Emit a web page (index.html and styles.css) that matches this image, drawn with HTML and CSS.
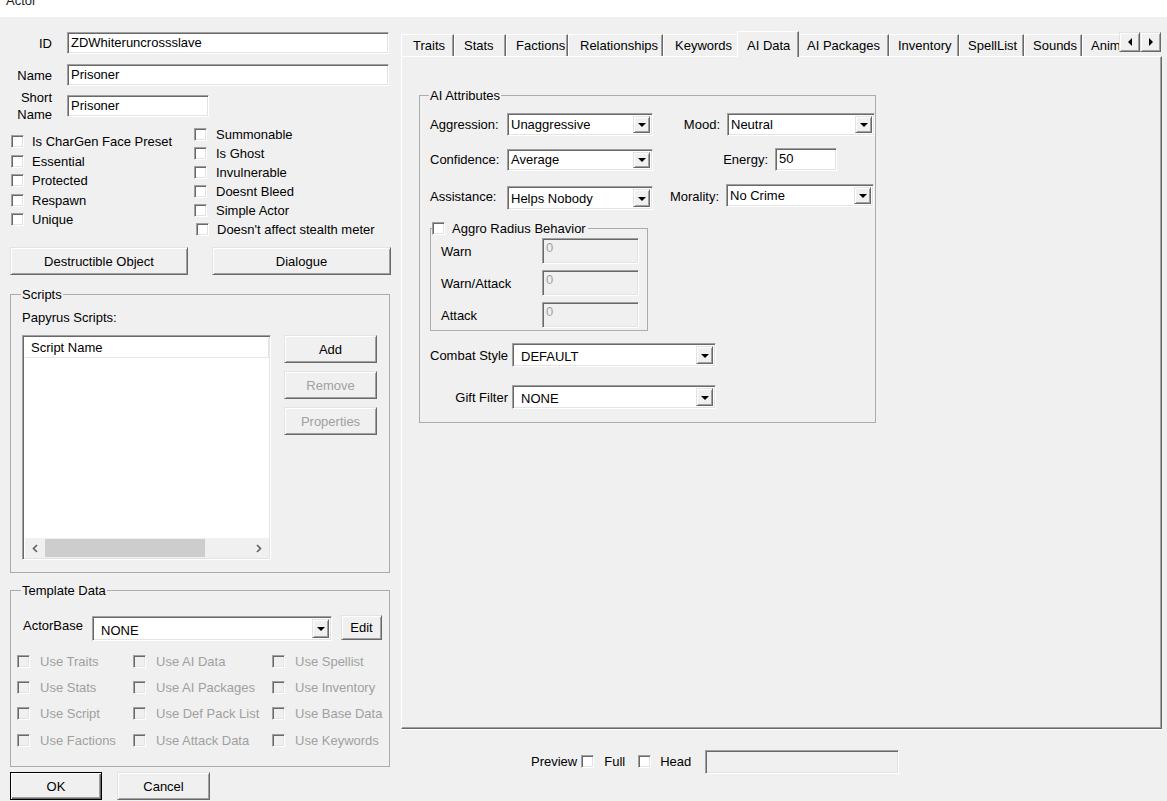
FILE: index.html
```html
<!DOCTYPE html>
<html lang="en">
<head>
    <meta charset="utf-8">
    <title>Actor</title>
    <link rel="stylesheet" href="styles.css">
</head>
<body>
<div class="caption"><span>Actor</span></div>

<div class="dialog">
    <!-- left side: base record fields -->
    <div class="left">
        <div class="field-row row-id">
            <span class="field-label">ID</span>
            <div class="edit edit-long">ZDWhiteruncrossslave</div>
        </div>
        <div class="field-row row-name">
            <span class="field-label">Name</span>
            <div class="edit edit-long">Prisoner</div>
        </div>
        <div class="field-row row-short">
            <span class="field-label">Short<br>Name</span>
            <div class="edit edit-short">Prisoner</div>
        </div>

        <div class="flags">
            <div class="flag-col flag-col-a">
                <div class="check-row"><span class="check"></span>Is CharGen Face Preset</div>
                <div class="check-row"><span class="check"></span>Essential</div>
                <div class="check-row"><span class="check"></span>Protected</div>
                <div class="check-row"><span class="check"></span>Respawn</div>
                <div class="check-row"><span class="check"></span>Unique</div>
            </div>
            <div class="flag-col flag-col-b">
                <div class="check-row"><span class="check"></span>Summonable</div>
                <div class="check-row"><span class="check"></span>Is Ghost</div>
                <div class="check-row"><span class="check"></span>Invulnerable</div>
                <div class="check-row"><span class="check"></span>Doesnt Bleed</div>
                <div class="check-row"><span class="check"></span>Simple Actor</div>
                <div class="check-row shifted"><span class="check"></span>Doesn't affect stealth meter</div>
            </div>
        </div>

        <div class="btn-row">
            <button class="btn btn-destructible">Destructible Object</button>
            <button class="btn btn-dialogue">Dialogue</button>
        </div>

        <fieldset class="group group-scripts">
            <legend>Scripts</legend>
            <div class="papyrus-label">Papyrus Scripts:</div>
            <div class="scripts-body">
                <div class="listbox">
                    <div class="list-header">Script Name</div>
                    <div class="list-body"></div>
                    <div class="hscroll">
                        <span class="hscroll-arrow">
                            <svg width="6" height="9" viewBox="0 0 6 9"><polyline points="5,1 1.5,4.5 5,8" fill="none" stroke="#606060" stroke-width="1.6"/></svg>
                        </span>
                        <span class="hscroll-track"><span class="hscroll-thumb"></span></span>
                        <span class="hscroll-arrow">
                            <svg width="6" height="9" viewBox="0 0 6 9"><polyline points="1,1 4.5,4.5 1,8" fill="none" stroke="#606060" stroke-width="1.6"/></svg>
                        </span>
                    </div>
                </div>
                <div class="list-buttons">
                    <button class="btn btn-side">Add</button>
                    <button class="btn btn-side disabled">Remove</button>
                    <button class="btn btn-side disabled">Properties</button>
                </div>
            </div>
        </fieldset>

        <fieldset class="group group-template">
            <legend>Template Data</legend>
            <div class="actorbase-row">
                <span class="actorbase-label">ActorBase</span>
                <div class="combo combo-wide combo-actorbase"><span class="combo-text">NONE</span><span class="combo-btn"></span></div>
                <button class="btn btn-edit">Edit</button>
            </div>
            <div class="template-grid">
                <div class="check-row disabled"><span class="check"></span>Use Traits</div>
                <div class="check-row disabled"><span class="check"></span>Use AI Data</div>
                <div class="check-row disabled"><span class="check"></span>Use Spellist</div>
                <div class="check-row disabled"><span class="check"></span>Use Stats</div>
                <div class="check-row disabled"><span class="check"></span>Use AI Packages</div>
                <div class="check-row disabled"><span class="check"></span>Use Inventory</div>
                <div class="check-row disabled"><span class="check"></span>Use Script</div>
                <div class="check-row disabled"><span class="check"></span>Use Def Pack List</div>
                <div class="check-row disabled"><span class="check"></span>Use Base Data</div>
                <div class="check-row disabled"><span class="check"></span>Use Factions</div>
                <div class="check-row disabled"><span class="check"></span>Use Attack Data</div>
                <div class="check-row disabled"><span class="check"></span>Use Keywords</div>
            </div>
        </fieldset>

        <div class="btn-row bottom-btns">
            <button class="btn btn-default btn-ok">OK</button>
            <button class="btn btn-cancel">Cancel</button>
        </div>
    </div>

    <!-- right side: tab control -->
    <div class="right">
        <div class="tabs">
            <div class="tab tab-traits">Traits</div>
            <div class="tab tab-stats">Stats</div>
            <div class="tab tab-factions">Factions</div>
            <div class="tab tab-relationships">Relationships</div>
            <div class="tab tab-keywords">Keywords</div>
            <div class="tab tab-aidata active">AI Data</div>
            <div class="tab tab-aipackages">AI Packages</div>
            <div class="tab tab-inventory">Inventory</div>
            <div class="tab tab-spelllist">SpellList</div>
            <div class="tab tab-sounds">Sounds</div>
            <div class="tab tab-anim">Animation</div>
            <div class="tab-scroll">
                <span class="scroll-btn"><span class="tri tri-left"></span></span>
                <span class="scroll-btn"><span class="tri tri-right"></span></span>
            </div>
        </div>

        <div class="tab-panel">
            <fieldset class="group group-ai">
                <legend>AI Attributes</legend>

                <div class="ai-row ai-row-1">
                    <span class="ai-label">Aggression:</span>
                    <div class="combo combo-ai"><span class="combo-text">Unaggressive</span><span class="combo-btn"></span></div>
                    <span class="ai-label-2 label-mood">Mood:</span>
                    <div class="combo combo-ai2"><span class="combo-text">Neutral</span><span class="combo-btn"></span></div>
                </div>
                <div class="ai-row ai-row-2">
                    <span class="ai-label">Confidence:</span>
                    <div class="combo combo-ai combo-short"><span class="combo-text">Average</span><span class="combo-btn"></span></div>
                    <span class="ai-label-2 label-energy">Energy:</span>
                    <div class="edit edit-energy">50</div>
                </div>
                <div class="ai-row ai-row-3">
                    <span class="ai-label">Assistance:</span>
                    <div class="combo combo-ai combo-low"><span class="combo-text">Helps Nobody</span><span class="combo-btn"></span></div>
                    <span class="ai-label-2 label-morality">Morality:</span>
                    <div class="combo combo-ai2 combo-high"><span class="combo-text">No Crime</span><span class="combo-btn"></span></div>
                </div>

                <fieldset class="group group-aggro">
                    <legend class="aggro-legend"><span class="check"></span>Aggro Radius Behavior</legend>
                    <div class="aggro-row">
                        <span class="aggro-label">Warn</span>
                        <div class="edit edit-disabled">0</div>
                    </div>
                    <div class="aggro-row">
                        <span class="aggro-label">Warn/Attack</span>
                        <div class="edit edit-disabled">0</div>
                    </div>
                    <div class="aggro-row">
                        <span class="aggro-label">Attack</span>
                        <div class="edit edit-disabled">0</div>
                    </div>
                </fieldset>

                <div class="ai-row style-row">
                    <span class="ai-label-3">Combat Style</span>
                    <div class="combo combo-wide combo-style"><span class="combo-text">DEFAULT</span><span class="combo-btn"></span></div>
                </div>
                <div class="ai-row style-row gift-row">
                    <span class="ai-label-3">Gift Filter</span>
                    <div class="combo combo-wide combo-style"><span class="combo-text">NONE</span><span class="combo-btn"></span></div>
                </div>
            </fieldset>
        </div>

        <div class="preview">
            <span>Preview</span>
            <span class="check check-preview"></span>
            <span>Full</span>
            <span class="check check-head"></span>
            <span>Head</span>
            <div class="edit edit-preview"></div>
        </div>
    </div>
</div>
</body>
</html>
```

FILE: styles.css
```css
body {
    margin: 0;
    background: #f0f0f0;
    font-family: "Liberation Sans", Arial, sans-serif;
    font-size: 13px;
    color: #000;
    overflow: hidden;
}

/* window caption (scrolled off the top) */
.caption {
    height: 17px;
    background: #fff;
    overflow: hidden;
}

.caption span {
    display: block;
    padding-left: 6px;
    line-height: 15px;
    margin-top: -7px;
    color: #222;
}

.dialog {
    display: flex;
}

.left {
    width: 380px;
    padding-left: 10px;
    flex: none;
}

.right {
    width: 761px;
    margin-left: 11px;
    padding-top: 14px;
    flex: none;
}

/* sunken edit field */
.edit {
    box-sizing: border-box;
    height: 22px;
    background: #fff;
    border-top: 1px solid #a0a0a0;
    border-left: 1px solid #a0a0a0;
    border-right: 1px solid #fff;
    border-bottom: 1px solid #fff;
    box-shadow: inset 1px 1px #696969, inset -1px -1px #e3e3e3;
    padding: 0 3px;
    line-height: 20px;
    white-space: nowrap;
    overflow: hidden;
}

.edit-disabled {
    background: #f0f0f0;
    color: #a0a0a0;
}

/* raised push button */
.btn {
    font: inherit;
    color: #000;
    background: #f0f0f0;
    border: 1px solid;
    border-color: #e3e3e3 #696969 #696969 #e3e3e3;
    box-shadow: inset 1px 1px #fff, inset -1px -1px #a0a0a0;
    padding: 0;
    height: 28px;
    flex: none;
}

.btn.disabled {
    color: #a0a0a0;
}

.btn-default {
    border-color: #000;
    box-shadow: inset 1px 1px #fff, inset -1px -1px #696969, inset -2px -2px #a0a0a0;
}

/* checkbox */
.check {
    display: inline-block;
    box-sizing: border-box;
    width: 13px;
    height: 13px;
    background: #fff;
    border-top: 1px solid #a0a0a0;
    border-left: 1px solid #a0a0a0;
    border-right: 1px solid #fff;
    border-bottom: 1px solid #fff;
    box-shadow: inset 1px 1px #696969, inset -1px -1px #e3e3e3;
    flex: none;
}

.check-row {
    display: flex;
    align-items: center;
    height: 19px;
    white-space: nowrap;
}

.check-row .check {
    margin-left: 1px;
    margin-right: 8px;
}

.check-row.disabled {
    color: #a0a0a0;
}

.check-row.disabled .check {
    background: #f0f0f0;
}

/* group box */
.group {
    margin: 0;
    padding: 0 11px;
    border: 1px solid #acacac;
    min-width: 0;
    box-sizing: border-box;
}

.group legend {
    padding: 0 1px;
    margin-left: -1px;
    line-height: 15px;
}

/* combo box */
.combo {
    display: flex;
    align-items: center;
    box-sizing: border-box;
    height: 23px;
    background: #fff;
    border-top: 1px solid #a0a0a0;
    border-left: 1px solid #a0a0a0;
    border-right: 1px solid #fff;
    border-bottom: 1px solid #fff;
    box-shadow: inset 1px 1px #696969, inset -1px -1px #e3e3e3;
    padding: 2px 2px 2px 3px;
    flex: none;
}

.combo-text {
    flex: 1;
    white-space: nowrap;
    overflow: hidden;
}

.combo-btn {
    width: 17px;
    align-self: stretch;
    box-sizing: border-box;
    background: #f0f0f0;
    border: 1px solid;
    border-color: #e3e3e3 #696969 #696969 #e3e3e3;
    box-shadow: inset 1px 1px #fff, inset -1px -1px #a0a0a0;
    display: flex;
    align-items: center;
    justify-content: center;
}

.combo-btn::after {
    content: "";
    border-left: 4px solid transparent;
    border-right: 4px solid transparent;
    border-top: 4px solid #000;
    margin-top: 1px;
}

.combo-wide {
    padding-left: 8px;
}

.combo-wide .combo-text {
    padding-top: 3px;
}

/* ---- left side ---- */
.field-row {
    display: flex;
    align-items: center;
}

.field-label {
    width: 42px;
    margin-right: 15px;
    text-align: right;
    line-height: 17px;
    flex: none;
}

.row-id {
    margin-top: 15px;
}

.row-name {
    margin-top: 10px;
}

.row-short {
    margin-top: 3px;
}

.edit-long {
    width: 322px;
}

.edit-short {
    width: 142px;
}

.flags {
    display: flex;
    margin-top: 2px;
}

.flag-col-a {
    width: 183px;
    padding-top: 7px;
}

.flag-col-a .check-row {
    height: 19.5px;
}

.flag-col-b .check-row .check {
    margin-right: 9px;
}

.flag-col-b .shifted .check {
    margin-left: 3px;
    margin-right: 8px;
}

.btn-row {
    display: flex;
    gap: 24px;
    margin-top: 8px;
}

.btn-destructible {
    width: 178px;
}

.btn-dialogue {
    width: 179px;
}

.group-scripts {
    width: 380px;
    margin-top: 12px;
    padding-bottom: 12px;
}

.papyrus-label {
    margin-top: 8px;
    line-height: 15px;
}

.scripts-body {
    display: flex;
    margin-top: 10px;
}

.listbox {
    width: 249px;
    height: 225px;
    box-sizing: border-box;
    background: #fff;
    border-top: 1px solid #a0a0a0;
    border-left: 1px solid #a0a0a0;
    border-right: 1px solid #fff;
    border-bottom: 1px solid #fff;
    box-shadow: inset 1px 1px #696969, inset -1px -1px #e3e3e3;
    padding: 2px 1px 1px 2px;
    display: flex;
    flex-direction: column;
}

.list-header {
    height: 20px;
    box-sizing: border-box;
    border-bottom: 1px solid #e5e5e5;
    border-right: 1px solid #e5e5e5;
    padding-left: 6px;
    line-height: 19px;
}

.list-body {
    flex: 1;
}

.hscroll {
    height: 20px;
    display: flex;
    background: #f0f0f0;
}

.hscroll-arrow {
    width: 20px;
    display: flex;
    align-items: center;
    justify-content: center;
    flex: none;
}

.hscroll-track {
    flex: 1;
    display: flex;
    align-items: center;
}

.hscroll-thumb {
    width: 160px;
    height: 18px;
    background: #cdcdcd;
}

.list-buttons {
    display: flex;
    flex-direction: column;
    gap: 8px;
    margin-left: 13px;
}

.btn-side {
    width: 93px;
}

.group-template {
    width: 380px;
    margin-top: 10px;
    padding-bottom: 13px;
}

.actorbase-row {
    display: flex;
    align-items: flex-start;
    margin-top: 18px;
}

.actorbase-label {
    width: 69px;
    padding-left: 1px;
    margin-top: 2px;
    line-height: 15px;
    flex: none;
}

.combo-actorbase {
    width: 240px;
    height: 25px;
}

.btn-edit {
    width: 41px;
    height: 25px;
    margin-left: 9px;
    margin-top: -1px;
}

.template-grid {
    display: grid;
    grid-template-columns: 116px 139px 1fr;
    grid-auto-rows: 26.33px;
    margin: 7px 0 0 -6px;
}

.template-grid .check-row {
    height: auto;
}

.template-grid .check {
    margin-right: 10px;
}

.bottom-btns {
    margin-top: 5px;
    gap: 15px;
}

.btn-ok {
    width: 92px;
}

.btn-cancel {
    width: 93px;
}

/* ---- tab control ---- */
.tabs {
    position: relative;
    display: flex;
    align-items: flex-end;
    height: 25px;
}

.tab {
    box-sizing: border-box;
    height: 22px;
    border-top: 1px solid #fff;
    border-left: 1px solid #fff;
    border-right: 1px solid #696969;
    box-shadow: inset -1px 0 #a0a0a0;
    padding-left: 9px;
    line-height: 21px;
    white-space: nowrap;
    overflow: hidden;
    flex: none;
}

.tab.active {
    position: relative;
    z-index: 1;
    height: 26px;
    margin: 0 -2px -1px;
    padding-top: 3px;
    background: #f0f0f0;
}

.tab-traits { width: 53px; padding-left: 11px; }
.tab-stats { width: 52px; }
.tab-factions { width: 62px; }
.tab-relationships { width: 95px; padding-left: 11px; }
.tab-keywords { width: 76px; padding-left: 11px; }
.tab-aidata { width: 62px; }
.tab-aipackages { width: 92px; }
.tab-inventory { width: 70px; padding-left: 8px; }
.tab-spelllist { width: 65px; padding-left: 8px; }
.tab-sounds { width: 58px; padding-left: 8px; }
.tab-anim { width: 79px; padding-left: 8px; border-right: none; box-shadow: none; }

.tab-scroll {
    position: absolute;
    right: 1px;
    top: 1px;
    display: flex;
    background: #f0f0f0;
    z-index: 2;
}

.scroll-btn {
    box-sizing: border-box;
    width: 21px;
    height: 20px;
    border: 1px solid;
    border-color: #e3e3e3 #696969 #696969 #e3e3e3;
    box-shadow: inset 1px 1px #fff, inset -1px -1px #a0a0a0;
    display: flex;
    align-items: center;
    justify-content: center;
}

.tri {
    border-top: 4px solid transparent;
    border-bottom: 4px solid transparent;
}

.tri-left {
    border-right: 4px solid #000;
}

.tri-right {
    border-left: 4px solid #000;
}

.tab-panel {
    box-sizing: border-box;
    height: 673px;
    border-top: 1px solid #fff;
    border-left: 1px solid #fff;
    border-right: 1px solid #696969;
    border-bottom: 1px solid #696969;
    box-shadow: inset -1px -1px #a0a0a0, 0 1px #fff;
    padding-top: 31px;
    padding-left: 17px;
}

.group-ai {
    width: 457px;
    padding: 0 0 13px 10px;
}

.ai-row {
    display: flex;
    align-items: center;
}

.ai-row-1 {
    margin-top: 10px;
}

.ai-row-2,
.ai-row-3 {
    margin-top: 12px;
}

.ai-label {
    width: 77px;
    flex: none;
}

.combo-ai {
    width: 146px;
}

.combo-short {
    height: 22px;
}

.combo-low {
    height: 24px;
    margin-top: 3px;
}

.combo-ai2 {
    width: 148px;
}

.combo-high {
    margin-top: -2px;
}

.ai-label-2 {
    box-sizing: border-box;
    text-align: right;
    padding-right: 7px;
    flex: none;
}

.label-mood { width: 74px; }
.label-energy { width: 122px; }
.label-morality { width: 73px; }

.edit-energy {
    width: 62px;
    height: 23px;
}

.group-aggro {
    width: 218px;
    margin-top: 11px;
    padding: 2px 0 2px 1px;
}

.group-aggro legend.aggro-legend {
    margin-left: 0;
    padding: 0 2px 0 0;
}

.aggro-legend .check {
    vertical-align: -2px;
    margin-right: 7px;
}

.aggro-row {
    display: flex;
    align-items: center;
    height: 26px;
    padding-left: 9px;
}

.aggro-row + .aggro-row {
    margin-top: 6px;
}

.aggro-label {
    width: 101px;
    flex: none;
}

.aggro-row .edit {
    width: 97px;
    height: 26px;
    line-height: 18px;
}

.style-row {
    margin-top: 12px;
}

.gift-row {
    margin-top: 18px;
}

.ai-label-3 {
    box-sizing: border-box;
    width: 82px;
    padding-right: 4px;
    text-align: right;
    white-space: nowrap;
    flex: none;
}

.combo-style {
    width: 204px;
    height: 24px;
}

/* preview strip under the tabs */
.preview {
    display: flex;
    align-items: center;
    height: 23px;
    margin: 21px 0 0 130px;
}

.preview .check {
    margin: 0 10px 0 4px;
}

.preview .check-head {
    margin: 0 9px 0 13px;
}

.edit-preview {
    width: 194px;
    height: 24px;
    margin-left: 14px;
    background: #f0f0f0;
}
```
